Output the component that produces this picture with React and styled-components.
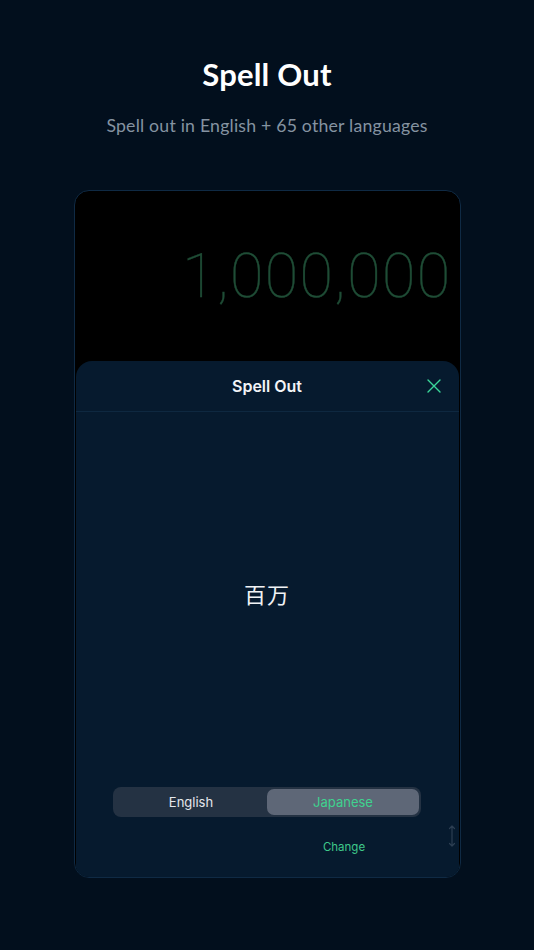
import React from "react";
import styled, { createGlobalStyle } from "styled-components";

const Global = createGlobalStyle`
  html, body { margin: 0; padding: 0; background: #020f1d; }
  body { width: 534px; height: 950px; overflow: hidden; font-family: "Inter", "Noto Sans", sans-serif; }
`;

const Page = styled.div`
  width: 534px;
  height: 950px;
  background: #020f1d;
  display: flex;
  flex-direction: column;
  align-items: center;
  box-sizing: border-box;
  padding-top: 53px;
`;

const Title = styled.h1`
  margin: 0;
  font-family: "Lato", "Noto Sans", sans-serif;
  font-weight: 700;
  font-size: 31px;
  line-height: 42px;
  color: #ffffff;
  letter-spacing: 0.2px;
`;

const Subtitle = styled.p`
  margin: 19px 0 0;
  font-family: "Lato", "Noto Sans", sans-serif;
  font-weight: 400;
  font-size: 17.7px;
  line-height: 24px;
  color: #8593a1;
  letter-spacing: 0.2px;
`;

const Device = styled.div`
  margin-top: 52px;
  width: 387px;
  height: 688px;
  box-sizing: border-box;
  border: 1.5px solid #0f2a44;
  border-radius: 15px;
  background: #000;
  overflow: hidden;
  display: flex;
  flex-direction: column;
`;

const Display = styled.div`
  height: 170px;
  flex: none;
  display: flex;
  justify-content: flex-end;
  align-items: flex-start;
  padding: 47px 8px 0 0;
  box-sizing: border-box;
`;

const Number = styled.div`
  font-family: "Roboto", sans-serif;
  font-weight: 100;
  font-size: 61px;
  line-height: 76px;
  color: #1f4d36;
  letter-spacing: 1.4px;
  -webkit-text-stroke: 0.4px #1f4d36;
`;

const Sheet = styled.div`
  flex: 1;
  margin: 0 1px;
  background: #061a2e;
  border-radius: 16px 16px 0 0;
  display: flex;
  flex-direction: column;
`;

const Header = styled.div`
  height: 50px;
  flex: none;
  position: relative;
  display: flex;
  align-items: center;
  justify-content: center;
  border-bottom: 1px solid #0e2840;
`;

const HeaderTitle = styled.div`
  font-family: "Inter", "Noto Sans", sans-serif;
  font-weight: 600;
  font-size: 16px;
  color: #f2f4f7;
`;

const CloseButton = styled.button`
  position: absolute;
  right: 18px;
  top: 18px;
  width: 14px;
  height: 14px;
  padding: 0;
  border: none;
  background: none;
  display: flex;
`;

const Body = styled.div`
  flex: 1;
  display: flex;
  flex-direction: column;
  align-items: center;
`;

const Words = styled.div`
  flex: 1;
  display: flex;
  align-items: center;
  justify-content: center;
  padding-bottom: 13px;
  font-family: "Noto Sans CJK JP", "Noto Sans", sans-serif;
  font-size: 22px;
  color: #f0f2f5;
  letter-spacing: 1px;
`;

const Segmented = styled.div`
  width: 308px;
  height: 30px;
  box-sizing: border-box;
  padding: 2px;
  border-radius: 8px;
  background: #243243;
  display: grid;
  grid-template-columns: 1fr 1fr;
`;

const Segment = styled.div`
  display: flex;
  align-items: center;
  justify-content: center;
  border-radius: 7px;
  font-family: "Inter", "Noto Sans", sans-serif;
  font-size: 13px;
  background: ${(p) => (p.$active ? "#5e6777" : "transparent")};
  color: ${(p) => (p.$active ? "#3fd28f" : "#e4e7ec")};
`;

const Footer = styled.div`
  width: 308px;
  height: 60px;
  position: relative;
  display: grid;
  grid-template-columns: 1fr 1fr;
`;

const ChangeLink = styled.div`
  grid-column: 2;
  justify-self: center;
  padding-top: 23px;
  font-family: "Inter", "Noto Sans", sans-serif;
  font-size: 11.5px;
  color: #3fc88a;
`;

const ResizeIcon = styled.div`
  position: absolute;
  right: -35px;
  top: 8px;
  display: flex;
`;

export default function App() {
  return (
    <>
      <Global />
      <Page>
        <Title>Spell Out</Title>
        <Subtitle>Spell out in English + 65 other languages</Subtitle>
        <Device>
          <Display>
            <Number>1,000,000</Number>
          </Display>
          <Sheet>
            <Header>
              <HeaderTitle>Spell Out</HeaderTitle>
              <CloseButton aria-label="close">
                <svg width="14" height="14" viewBox="0 0 14 14">
                  <path d="M1 1L13 13M13 1L1 13" stroke="#3ad79a" strokeWidth="1.4" strokeLinecap="round" />
                </svg>
              </CloseButton>
            </Header>
            <Body>
              <Words>百万</Words>
              <Segmented>
                <Segment>English</Segment>
                <Segment $active>Japanese</Segment>
              </Segmented>
              <Footer>
                <ChangeLink>Change</ChangeLink>
                <ResizeIcon>
                  <svg width="8" height="22" viewBox="0 0 8 22">
                    <path d="M4 1V21M1.5 3.5L4 1L6.5 3.5M1.5 18.5L4 21L6.5 18.5" stroke="#2c3e52" strokeWidth="1.2" fill="none" strokeLinecap="round" strokeLinejoin="round" />
                  </svg>
                </ResizeIcon>
              </Footer>
            </Body>
          </Sheet>
        </Device>
      </Page>
    </>
  );
}
